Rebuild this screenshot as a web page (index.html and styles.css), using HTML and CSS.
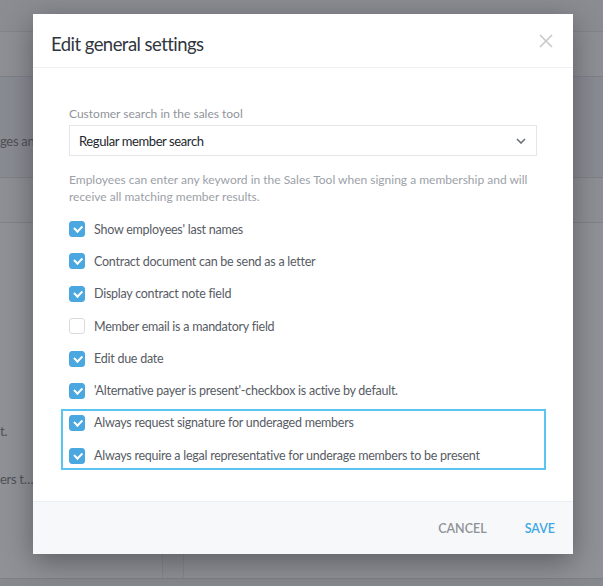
FILE: index.html
```html
<!DOCTYPE html>
<html lang="en">

<head>
    <meta charset="UTF-8">
    <meta name="viewport" content="width=device-width, initial-scale=1.0">
    <title>Edit general settings</title>
    <link rel="stylesheet" href="styles.css">
</head>

<body>
    <!-- page behind the dimmed overlay -->
    <div class="page">
        <div class="page-top"></div>
        <div class="page-band"></div>
        <div class="page-section">
            <span class="bg-text bg-text-first">ges and</span>
        </div>
        <div class="page-band"></div>
        <div class="page-columns">
            <div class="page-left">
                <span class="bg-text bg-text-mid">t.</span>
                <span class="bg-text bg-text-last">ers t…</span>
            </div>
            <div class="page-right"></div>
        </div>
        <div class="page-bottom"></div>
    </div>

    <div class="modal">
        <div class="modal-header">
            <h1>Edit general settings</h1>
            <button class="close-btn" aria-label="Close">
                <svg width="14" height="14" viewBox="0 0 14 14">
                    <path d="M1 1 L13 13 M13 1 L1 13" stroke="#c5c8cc" stroke-width="1.6" fill="none" />
                </svg>
            </button>
        </div>

        <div class="modal-body">
            <label class="field-label" for="searchType">Customer search in the sales tool</label>
            <div class="select">
                <span id="searchType">Regular member search</span>
                <svg width="10" height="6" viewBox="0 0 10 6">
                    <path d="M1 1 L5 5 L9 1" stroke="#6b7077" stroke-width="1.6" fill="none" />
                </svg>
            </div>
            <p class="help-text">Employees can enter any keyword in the Sales Tool when signing a membership and will receive all matching member results.</p>

            <div class="check-list">
                <div class="check-row"><span class="box checked"></span>Show employees' last names</div>
                <div class="check-row"><span class="box checked"></span>Contract document can be send as a letter</div>
                <div class="check-row"><span class="box checked"></span>Display contract note field</div>
                <div class="check-row"><span class="box"></span>Member email is a mandatory field</div>
                <div class="check-row"><span class="box checked"></span>Edit due date</div>
                <div class="check-row"><span class="box checked"></span>'Alternative payer is present'-checkbox is active by default.</div>
            </div>

            <div class="highlight">
                <div class="check-row"><span class="box checked"></span>Always request signature for underaged members</div>
                <div class="check-row"><span class="box checked"></span>Always require a legal representative for underage members to be present</div>
            </div>
        </div>

        <div class="modal-footer">
            <button class="text-btn cancel">Cancel</button>
            <button class="text-btn save">Save</button>
        </div>
    </div>
</body>

</html>
```

FILE: styles.css
```css
* {
    margin: 0;
    padding: 0;
    box-sizing: border-box;
}

body {
    font-family: Lato, 'Noto Sans', sans-serif;
    background: #8f9196;
    width: 603px;
    height: 586px;
    overflow: hidden;
    position: relative;
}

/* background page (already dimmed) */
.page {
    display: flex;
    flex-direction: column;
    height: 100%;
}

.page-top {
    height: 32px;
    background: #8b8d92;
    border-bottom: 1px solid #82858a;
}

.page-band {
    height: 45px;
    background: #8e9095;
    border-bottom: 1px solid #7f8287;
}

.page-section {
    height: 101px;
    background: #8a8c93;
    border-bottom: 1px solid #7f8287;
    position: relative;
}

.page-columns {
    display: flex;
    gap: 20px;
    height: 355px;
}

.page-left {
    width: 163px;
    background: #909297;
    border-right: 1px solid #85888d;
    position: relative;
}

.page-right {
    flex: 1;
    background: #909297;
    border-left: 1px solid #85888d;
}

.page-bottom {
    flex: 1;
    background: #86898e;
    border-top: 1px solid #7d8085;
}

.bg-text {
    position: absolute;
    left: 0;
    font-size: 13px;
    letter-spacing: -0.3px;
    color: #4e5156;
    white-space: nowrap;
}

.bg-text-first {
    top: 56px;
}

.bg-text-mid {
    top: 200px;
}

.bg-text-last {
    top: 248px;
}

/* modal */
.modal {
    position: absolute;
    left: 33px;
    top: 14px;
    width: 540px;
    height: 540px;
    background: #fff;
    display: flex;
    flex-direction: column;
    box-shadow: 0 8px 28px rgba(40, 42, 48, 0.5);
}

.modal-header {
    height: 54px;
    padding: 0 20px 0 18px;
    display: flex;
    align-items: center;
    justify-content: space-between;
    border-bottom: 1px solid #eef0f2;
}

.modal-header h1 {
    font-size: 18.5px;
    font-weight: 400;
    letter-spacing: -0.55px;
    color: #30363e;
    margin-top: 6px;
}

.close-btn {
    border: none;
    background: none;
    display: flex;
    cursor: pointer;
}

.modal-body {
    flex: 1;
    padding: 38px 36px 0 36px;
}

.field-label {
    display: block;
    font-size: 12px;
    color: #8f949b;
    line-height: 16px;
}

.select {
    margin-top: 3px;
    height: 31px;
    border: 1px solid #e4e6e9;
    display: flex;
    align-items: center;
    justify-content: space-between;
    padding: 0 10px 0 9px;
    font-size: 13px;
    letter-spacing: -0.4px;
    color: #23272d;
}

.help-text {
    margin-top: 15px;
    font-size: 12px;
    line-height: 17px;
    color: #9ca1a8;
}

.check-list {
    margin-top: 12px;
    display: flex;
    flex-direction: column;
    gap: 8.4px;
}

.check-row {
    height: 24px;
    display: flex;
    align-items: center;
    gap: 9px;
    font-size: 12.5px;
    letter-spacing: -0.25px;
    color: #575c64;
}

.box {
    width: 16px;
    height: 16px;
    border-radius: 3px;
    border: 1px solid #d8dbdf;
    background: #fff;
    flex-shrink: 0;
    position: relative;
}

.box.checked {
    background: #4aa7df;
    border-color: #4aa7df;
}

.box.checked::after {
    content: "";
    position: absolute;
    left: 4px;
    top: 3px;
    width: 6px;
    height: 3.5px;
    border-left: 2px solid #fff;
    border-bottom: 2px solid #fff;
    transform: rotate(-45deg);
}

.highlight {
    margin: 6px -9px 0 -8px;
    border: 2px solid #5ac5f3;
    padding: 0 7px 0 6px;
    display: flex;
    flex-direction: column;
    gap: 9px;
}

.modal-footer {
    height: 53px;
    background: #f7f8fa;
    border-top: 1px solid #eceef1;
    display: flex;
    align-items: center;
    justify-content: flex-end;
    gap: 38px;
    padding: 0 18px 0 0;
}

.text-btn {
    border: none;
    background: none;
    font-family: inherit;
    font-size: 12.5px;
    font-weight: 600;
    text-transform: uppercase;
    cursor: pointer;
}

.cancel {
    color: #8e9297;
}

.save {
    color: #3ea7e5;
}
```
